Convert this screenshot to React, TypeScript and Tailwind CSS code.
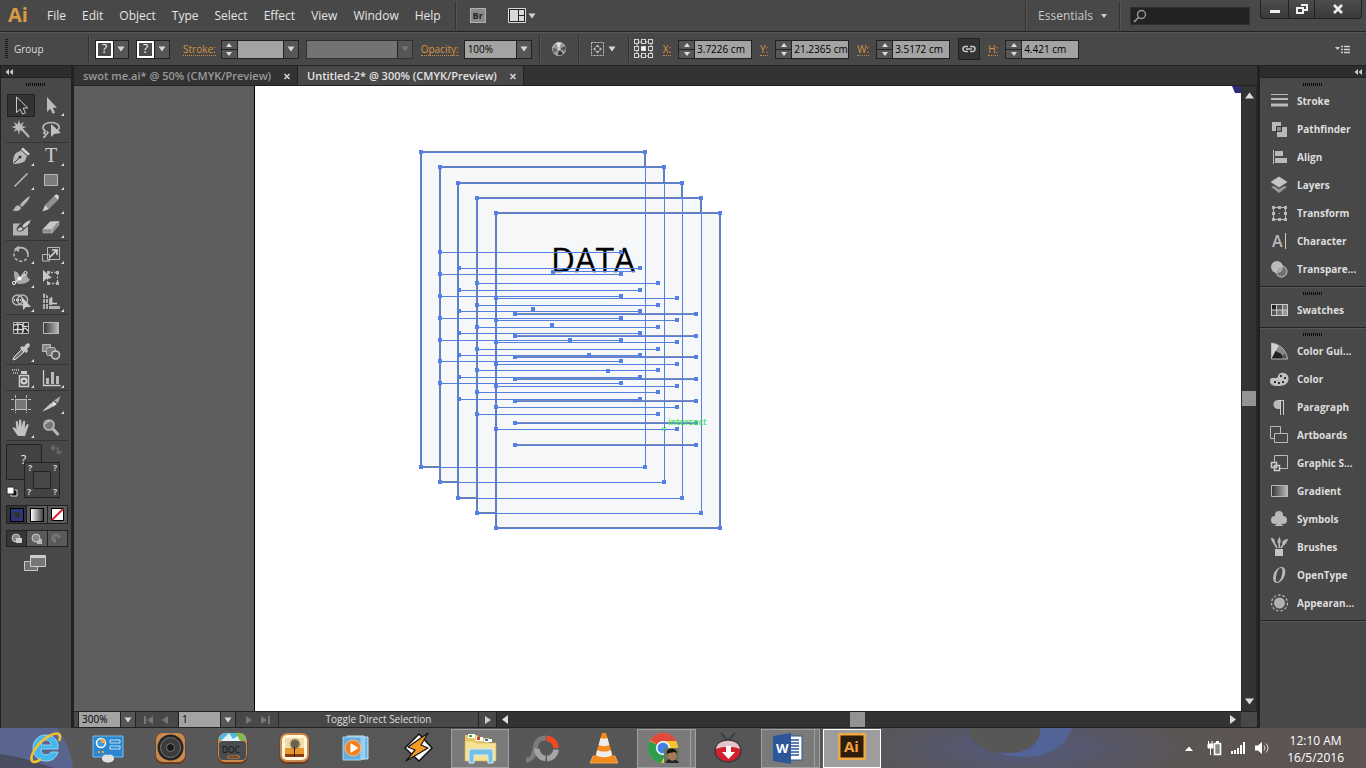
import React from 'react';

const menus = ['File', 'Edit', 'Object', 'Type', 'Select', 'Effect', 'View', 'Window', 'Help'];

const G = '#b9b9b9';

interface IconProps {
  w: number;
  h: number;
  children: React.ReactNode;
}

const Icon: React.FC<IconProps> = ({ w, h, children }) => (
  <svg width={w} height={h} viewBox={`0 0 ${w} ${h}`} className="shrink-0" fill="none" aria-hidden="true">
    {children}
  </svg>
);

const Separator = () => <div className="h-7 w-px shrink-0 bg-[#333333] shadow-[1px_0_0_#545454]" />;

const Grip = () => (
  <div className="flex h-[9px] items-center justify-center pt-1">
    <Icon w={20} h={3}>
      <path d="M0 1.500h20" stroke="#0c0c0c" strokeWidth="3" strokeDasharray="1 1" shapeRendering="crispEdges" />
    </Icon>
  </div>
);

const Down = ({ dim = false }: { dim?: boolean }) => (
  <Icon w={8} h={6}>
    <path d="M.5.5h7L4 5.500z" fill={dim ? '#777' : '#d6d6d6'} />
  </Icon>
);

const Spinner = ({ label }: { label: string }) => (
  <div className="flex h-full w-4 shrink-0 flex-col border-r border-[#222] bg-[#565656]">
    <button aria-label={`Increase ${label}`} className="flex flex-1 items-center justify-center border-b border-[#222]">
      <Icon w={6} h={4}><path d="M0 4h6L3 0z" fill="#ddd" /></Icon>
    </button>
    <button aria-label={`Decrease ${label}`} className="flex flex-1 items-center justify-center">
      <Icon w={6} h={4}><path d="M0 0h6L3 4z" fill="#ddd" /></Icon>
    </button>
  </div>
);

interface DropdownProps {
  label: string;
  value: string;
  id?: string;
  disabled?: boolean;
}

const Dropdown: React.FC<DropdownProps> = ({ label, value, id, disabled }) => (
  <div className="relative h-full flex-1">
    <select
      id={id}
      aria-label={id ? undefined : label}
      disabled={disabled}
      className="block h-full w-full appearance-none bg-[#a3a3a3] pl-[3px] text-[10px] text-black opacity-100 disabled:bg-[#737373]"
    >
      <option>{value}</option>
    </select>
    <span className="pointer-events-none absolute inset-y-0 right-0 flex w-[15px] items-center justify-center border-l border-[#222] bg-[#565656]">
      <Down dim={disabled} />
    </span>
  </div>
);

const labelClass = 'shrink-0 border-b border-dotted border-[#c98a45] leading-3 text-[#d8913f]';

interface NumberFieldProps {
  id: string;
  label: string;
  value: string;
}

const NumberField: React.FC<NumberFieldProps> = ({ id, label, value }) => (
  <div className="flex shrink-0 items-center gap-[7px]">
    <label htmlFor={id} className={labelClass}>{label}</label>
    <div className="flex h-[19px] w-[74px] border border-[#222]">
      <Spinner label={label} />
      <input id={id} defaultValue={value} className="h-full w-full min-w-0 bg-[#a3a3a3] pl-[2px] text-[10px] text-black" />
    </div>
  </div>
);

const SwatchPicker = ({ label }: { label: string }) => (
  <button aria-label={label} className="flex h-[19px] shrink-0 border border-[#222] bg-[#565656]">
    <span className="flex h-full w-[17px] items-center justify-center border-2 border-white bg-[#4c4c4c] text-[12px] leading-3 text-white">?</span>
    <span className="flex h-full w-[15px] items-center justify-center border-l border-[#222]"><Down /></span>
  </button>
);

const MenuBar = () => (
  <header className="flex h-8 shrink-0 items-stretch border-b border-[#222] bg-[#484848] text-[12px] text-[#e4e4e4]">
    <div className="flex items-center pl-2">
      <svg width="22" height="28" viewBox="0 0 22 28" aria-label="Illustrator">
        <text x="0" y="20" fontFamily="'Open Sans', sans-serif" fontWeight="700" fontSize="20" fill="#d89b45">Ai</text>
      </svg>
    </div>
    <nav className="flex items-center gap-4 pl-[17px]">
      {menus.map((m) => (
        <button key={m}>{m}</button>
      ))}
    </nav>
    <div className="flex items-center gap-[14px] pl-[14px]">
      <Separator />
      <button aria-label="Bridge" className="flex h-[15px] w-4 items-center justify-center border border-[#b0b0b0] bg-[#8a8a8a] text-[9px] font-bold text-[#222]">Br</button>
      <button aria-label="Arrange documents" className="ml-2 flex items-center gap-[2px]">
        <Icon w={18} h={15}>
          <path d="M.5.5h17v14H.5z" fill="#222" stroke="#ddd" />
          <path d="M2 2h8v11H2zM11 2h5v5h-5zM11 8h5v5h-5z" fill="#d8d8d8" />
        </Icon>
        <Down />
      </button>
    </div>
    <div className="ml-auto flex items-center">
      <Separator />
      <button className="flex items-center gap-2 px-3 text-[#c8c8c8]">
        Essentials
        <Icon w={6} h={4}><path d="M0 0h6L3 4z" fill="#ccc" /></Icon>
      </button>
      <Separator />
      <div className="relative ml-[10px]">
        <input aria-label="Search" className="block h-[18px] w-[120px] border border-[#303030] bg-[#222222] pl-5" />
        <span className="pointer-events-none absolute top-[2px] left-[3px]">
          <Icon w={14} h={14}>
            <circle cx="8.5" cy="5.5" r="4" stroke="#999" strokeWidth="1.4" />
            <path d="M5.6 8.4 1 13" stroke="#999" strokeWidth="1.6" />
          </Icon>
        </span>
      </div>
      <div className="mr-1 ml-[10px] flex h-[19px] self-start rounded-b-sm border border-t-0 border-[#222] bg-linear-to-b from-[#4d4d4d] to-[#3a3a3a]">
        <button aria-label="Minimize" className="flex w-7 items-center justify-center border-r border-[#222]">
          <Icon w={12} h={10}><path d="M1 6h10v3H1z" fill="#eee" /></Icon>
        </button>
        <button aria-label="Restore" className="flex w-[26px] items-center justify-center border-r border-[#222]">
          <Icon w={12} h={10}>
            <path d="M5 1h6v5H8M1 4h6v5H1z" stroke="#eee" strokeWidth="2" />
          </Icon>
        </button>
        <button aria-label="Close" className="flex w-[46px] items-center justify-center">
          <Icon w={12} h={10}><path d="m2 1 8 8M10 1 2 9" stroke="#eee" strokeWidth="2.6" /></Icon>
        </button>
      </div>
    </div>
  </header>
);

const ControlBar = () => (
  <div className="flex h-[34px] shrink-0 items-center border-t border-b border-t-[#575757] border-b-[#222] bg-[#484848] pl-[5px] text-[10px] text-[#dcdcdc]">
    <Icon w={3} h={20}><path d="M1.500 0v20" stroke="#1c1c1c" strokeWidth="3" strokeDasharray="1 1" /></Icon>
    <span className="w-20 shrink-0 pl-[6px]">Group</span>
    <Separator />
    <div className="ml-[6px] flex gap-[7px]">
      <SwatchPicker label="Fill" />
      <SwatchPicker label="Stroke color" />
    </div>
    <div className="ml-[13px] flex items-center gap-[5px]">
      <label htmlFor="stroke" className={labelClass}>Stroke:</label>
      <div className="flex h-[19px] w-[78px] border border-[#222]">
        <Spinner label="stroke" />
        <Dropdown id="stroke" label="Stroke" value="" />
      </div>
    </div>
    <div className="ml-[7px] flex h-[19px] w-[107px] shrink-0 border border-[#303030]">
      <Dropdown label="Brush definition" value="" disabled />
    </div>
    <div className="ml-2 flex items-center gap-[5px]">
      <label htmlFor="opacity" className={labelClass}>Opacity:</label>
      <div className="flex h-[19px] w-[68px] border border-[#222]">
        <Dropdown id="opacity" label="Opacity" value="100%" />
      </div>
    </div>
    <div className="ml-[7px] flex items-center gap-3">
      <Separator />
      <button aria-label="Recolor artwork">
        <Icon w={14} h={14}>
          <circle cx="7" cy="7" r="6.500" fill="#999" stroke="#c4c4c4" />
          <path d="M7 7 4 1.200A6.500 6.500 0 0 1 9 .9z" fill="#e0e0e0" />
          <path d="m7 7 6-3a6.500 6.500 0 0 1 .2 5z" fill="#555" />
          <path d="m7 7 4 5a6.500 6.500 0 0 1-5 1.200z" fill="#333" />
          <path d="m7 7-5 4a6.500 6.500 0 0 1-1.300-5z" fill="#666" />
          <circle cx="7" cy="7" r="1.800" fill="#ccc" />
        </Icon>
      </button>
      <Separator />
      <button aria-label="Isolate" className="flex items-center gap-1">
        <Icon w={13} h={14}>
          <path d="M.5.5h12v13H.5z" stroke="#c4c4c4" strokeDasharray="2 1" />
          <path d="M6.500 2.500 8.500 5h-4zM6.500 11.500l2-2.500h-4zM2 7l2.500-2v4zM11 7 8.500 5v4z" fill="#c4c4c4" />
        </Icon>
        <Down />
      </button>
      <Separator />
    </div>
    <div className="ml-[5px] shrink-0">
      <Icon w={20} h={20}>
        <path d="M3 3h14v14H3z" stroke="#ccc" />
        {[0, 7, 14].map((y) => [0, 7, 14].map((x) => (
          <rect key={`${x}-${y}`} x={x + 0.5} y={y + 0.5} width="4" height="4" fill={x === 7 && y === 7 ? '#fff' : '#484848'} stroke="#d4d4d4" />
        )))}
      </Icon>
    </div>
    <div className="ml-[9px] flex items-center gap-2">
      <NumberField id="x" label="X:" value="3.7226 cm" />
      <NumberField id="y" label="Y:" value="21.2365 cm" />
      <NumberField id="w" label="W:" value="3.5172 cm" />
      <button aria-label="Constrain proportions" className="flex h-[22px] w-[22px] items-center justify-center border border-[#222] bg-[#333]">
        <Icon w={14} h={8}>
          <path d="M6 1.500H3.500a2.500 2.500 0 0 0 0 5H6M8 1.500h2.500a2.500 2.500 0 0 1 0 5H8M4 4h6" stroke="#c4c4c4" strokeWidth="1.600" />
        </Icon>
      </button>
      <NumberField id="h" label="H:" value="4.421 cm" />
    </div>
    <button aria-label="Panel menu" className="mr-4 ml-auto">
      <Icon w={15} h={9}>
        <path d="M0 2h5L2.500 5z" fill="#ccc" />
        <path d="M6 1.500h2M9 1.500h6M6 4.500h2M9 4.500h6M6 7.500h2M9 7.500h6" stroke="#ccc" strokeWidth="1.500" />
      </Icon>
    </button>
  </div>
);

/* every tool glyph is drawn in a 28x24 cell */
const Corner = () => <path d="M24 22h3v-3z" fill="#ddd" />;

interface Tool {
  name: string;
  art: React.ReactNode;
  more?: boolean;
}

const toolGroups: Tool[][] = [
  [
    { name: 'Selection', art: <path d="M9.500 3v15.500l3.700-3.300 2.300 5 3-1.400-2.400-4.800h4.700z" fill="#303030" stroke="#ccc" /> },
    { name: 'Direct Selection', more: true, art: <path d="M10 3v15l3.300-3.200 2.400 5 2.400-1.100-2.300-4.900H20z" fill={G} /> },
    {
      name: 'Magic Wand',
      art: (
        <>
          <path d="m14 10 8 9" stroke={G} strokeWidth="2" />
          <path d="m12 2 1.200 4.300L17 4l-2 4 4.500 1-4.500 1.500L17 14l-4-2-1 5-1.300-5L6.500 14l2.300-3.500L4.500 9l4.300-1.200L6.500 4l4 2.300z" fill={G} />
        </>
      ),
    },
    {
      name: 'Lasso',
      art: (
        <>
          <path d="M9 13.500C3 10 7 4.500 14 4.500s11 5 6 8M9 13.500c-2 0-3 2-1 2.500s4-1 2-2.500m-1 2.500c0 1.500-1 3-3 3.500" stroke={G} strokeWidth="1.700" />
          <path d="M14 6v13l3-3 7-1z" fill="#c2c2c2" />
        </>
      ),
    },
  ],
  [
    {
      name: 'Pen',
      more: true,
      art: (
        <>
          <path d="M6 20c0-6 1-9 3-11l5-2.500 6 5.500-2 5c-3 2-6 3-12 3z" fill={G} />
          <path d="m16 3.500 7 6.500-2 1.500-7-6z" fill="#d2d2d2" />
          <path d="m6.500 19.500 6-6" stroke="#333" /><circle cx="13" cy="13" r="1.500" fill="#333" />
        </>
      ),
    },
    {
      name: 'Type',
      more: true,
      art: <text x="14" y="18" textAnchor="middle" fontFamily="'Liberation Serif', serif" fontSize="20" fill="#cccccc">T</text>,
    },
    { name: 'Line Segment', more: true, art: <path d="M7.500 18.500 20.500 5.500" stroke={G} strokeWidth="1.600" /> },
    { name: 'Rectangle', more: true, art: <path d="M7.500 6.500h13v11h-13z" fill="#7c7c7c" stroke={G} /> },
    {
      name: 'Paintbrush',
      art: (
        <>
          <path d="M23 4c-4 2-8 6-10 9l2 2c3-3 7-7 8-11z" fill={G} />
          <path d="M12 13.500c-3-.5-4 1-4.500 3-.5 1-1.500 1.500-2.500 1.500 4 2 9 1 9-2.500z" fill={G} />
        </>
      ),
    },
    {
      name: 'Pencil',
      more: true,
      art: (
        <>
          <path d="m8 13 9-9 4 4-9 9z" fill="#8f8f8f" />
          <path d="m17 4 2-1.500q2-.5 3 2L21 8z" fill="#d6d6d6" />
          <path d="M8 13 5.500 19.500 12 17z" fill="#cfcfcf" />
        </>
      ),
    },
    {
      name: 'Blob Brush',
      art: (
        <>
          <path d="M6 7.500h8c-4 3-5 5-4 7 3 2 6 1 8-2l3-2v9H6z" fill="#b4b4b4" />
          <path d="M24 3.500c-5 2-8 4-9 7l1.500 1.500C20 11 23 8 24 3.500zM14 11c-2 0-3 1.500-4 3.500 3 1 6 0 6-2z" fill="#ccc" stroke="#484848" strokeWidth=".5" />
        </>
      ),
    },
    {
      name: 'Eraser',
      more: true,
      art: (
        <>
          <path d="m13 5.500 9-.5-7 8H6z" fill="#c8c8c8" />
          <path d="M6 13h9v4H6zM15 13l7-8v4l-7 8z" fill="#8d8d8d" stroke="#bbb" strokeWidth=".6" />
        </>
      ),
    },
  ],
  [
    {
      name: 'Rotate',
      more: true,
      art: (
        <>
          <path d="M11 6.300A7 7 0 0 1 21 12" stroke={G} strokeWidth="1.700" />
          <path d="M21 12a7 7 0 1 1-12.500-4" stroke={G} strokeWidth="1.500" strokeDasharray="3 2" />
          <path d="m7 7 5-3.500V10z" fill={G} />
        </>
      ),
    },
    {
      name: 'Scale',
      more: true,
      art: (
        <>
          <path d="M10.500 5.500h12v12h-12zM5.500 12.500h7v6.500h-7z" stroke={G} />
          <path d="m13 15 6-6M15 8h5v5" stroke="#ddd" strokeWidth="1.500" />
        </>
      ),
    },
    {
      name: 'Width',
      more: true,
      art: (
        <>
          <path d="M7 5c5 1 5 4 6 7 1-5 4-6 6-4s1 5 4 5c-1 4-6 5-11 5-3 0-5-4-5-13z" fill="#a8a8a8" />
          <path d="M6 17.500 20 7" stroke="#eee" /><circle cx="7" cy="17" r="1.600" fill="#484848" stroke="#eee" />
          <circle cx="18.500" cy="7" r="1.600" fill="#484848" stroke="#eee" /><circle cx="12.500" cy="12.500" r="2" fill="#fff" />
        </>
      ),
    },
    {
      name: 'Free Transform',
      art: (
        <>
          <path d="M10.500 6.500h10v11h-10z" stroke={G} strokeWidth="1.300" strokeDasharray="2 1.500" />
          <path d="M19 5h3v3h-3zM19 16h3v3h-3zM10 16h3v3h-3zM10 5h3v3h-3z" fill={G} />
          <path d="M6 4v12l3-3 6-1z" fill="#c8c8c8" />
        </>
      ),
    },
    {
      name: 'Shape Builder',
      more: true,
      art: (
        <>
          <circle cx="10.500" cy="10" r="5" stroke={G} strokeWidth="1.500" /><circle cx="15.500" cy="10" r="5" stroke={G} strokeWidth="1.500" />
          <path d="M7 10h9" stroke="#fff" strokeWidth="1.500" strokeDasharray="1 1" />
          <path d="M16 8v12l3-3h5z" fill="#ccc" />
        </>
      ),
    },
    {
      name: 'Perspective Grid',
      more: true,
      art: (
        <>
          <path d="m6 3 5 3v13H6zM12 8l3 1v7h8v3H12z" fill="#b0b0b0" />
          <path d="M6 8.500h5M6 13.500h5M8.500 5v14M11.500 15.500H23" stroke="#484848" />
          <path d="M14.500 7v6.500H20" stroke="#ccc" strokeWidth="1.500" />
        </>
      ),
    },
  ],
  [
    {
      name: 'Mesh',
      art: (
        <>
          <path d="M6.500 6.500h15v11h-15z" fill="#303030" stroke={G} />
          <path d="M7 9c4 0 5-2 8 0s3 2 6 1M7 14c4-2 6 1 9-1s3 0 5 2M10 7c3 3-1 6 1 10M17 7c-4 3 2 6-2 10" stroke="#ddd" strokeWidth="1.300" />
        </>
      ),
    },
    { name: 'Gradient', art: <path d="M6.500 6.500h15v11h-15z" fill="url(#metal)" stroke={G} /> },
    {
      name: 'Eyedropper',
      more: true,
      art: (
        <>
          <path d="m6 20 1-3 7.500-7.500 2.500 2.500L9 19z" fill="#777" stroke="#ddd" />
          <path d="m13 8 2-2 2 1 2-3c2-2 5 0 3.500 2.500L20 9l1 2-2 2z" fill="#c8c8c8" />
        </>
      ),
    },
    {
      name: 'Blend',
      art: (
        <>
          <path d="M5.500 4.500h8v7h-8z" fill="#888" stroke={G} /><rect x="9.500" y="7.500" width="9" height="8" rx="2" fill="#777" stroke={G} />
          <circle cx="18.500" cy="15" r="4" fill="#555" stroke="#c8c8c8" strokeWidth="1.600" />
        </>
      ),
    },
  ],
  [
    {
      name: 'Symbol Sprayer',
      more: true,
      art: (
        <>
          <path d="M12.500 9.500h9v11h-9z" fill="#505050" stroke="#ccc" strokeWidth="1.500" /><path d="M14 5h6v3h-6z" fill="#ccc" />
          <circle cx="17" cy="15" r="2.500" stroke="#ddd" strokeWidth="1.800" />
          <path d="M5 4h8M6 7h6" stroke="#ccc" strokeWidth="1.300" strokeDasharray="1 1" />
        </>
      ),
    },
    {
      name: 'Column Graph',
      more: true,
      art: (
        <>
          <path d="M6.500 4v15.500h17" stroke="#ccc" strokeWidth="1.300" />
          <path d="M9 12h3v6H9zM14 6h3v12h-3zM19 10h3v8h-3z" fill={G} />
        </>
      ),
    },
  ],
  [
    {
      name: 'Artboard',
      art: (
        <>
          <path d="M8 8h12v9H8z" fill="#777" />
          <path d="M4 7.500h20M4 17.500h20M8.500 3v18M19.500 3v18" stroke={G} strokeDasharray="3 1 12 1 3" />
        </>
      ),
    },
    {
      name: 'Slice',
      more: true,
      art: (
        <>
          <path d="M17 8.500 23.500 4 21 11z" fill="#aaa" />
          <path d="m16 9 4 3-3.500 2.500-2-2z" fill="#e0e0e0" />
          <path d="m14 11 3 3c-4 2-7 4-12 5.500z" fill="#c8c8c8" />
        </>
      ),
    },
    {
      name: 'Hand',
      more: true,
      art: (
        <path
          d="M11 20c-2-3-4-5-5.500-8 1-1.500 2.500-.5 4 1.500L8.700 6c.7-1.500 2-1 2.300.3l1 4.700V4.500c.5-1.500 2-1.500 2.300 0L14.700 11 16 5.500c.7-1.200 2-.8 2.200.5L17.700 12l2-3.500c1-1 2.300 0 1.800 1.300L19 17l-1 3z"
          fill="#c0c0c0"
        />
      ),
    },
    {
      name: 'Zoom',
      art: (
        <>
          <circle cx="12" cy="9" r="5" fill="#777" stroke={G} strokeWidth="1.700" />
          <path d="m16 13 5.500 6" stroke={G} strokeWidth="3" />
          <path d="M9 8c.5-2 2-3 4-2.500" stroke="#ddd" />
        </>
      ),
    },
  ],
];

const DockHeader = ({ end = false }: { end?: boolean }) => (
  <div className={`flex h-3 items-center border-b border-[#222] bg-[#2d2d2d] px-1 ${end ? 'justify-end' : ''}`}>
    <Icon w={8} h={6}><path d="M4 0v6L.5 3zM8 0v6L4.500 3z" fill="#ccc" /></Icon>
  </div>
);

const ToolPanel = () => (
  <aside className="flex w-[73px] shrink-0 flex-col border-r-2 border-l border-[#222] bg-[#484848]">
    <DockHeader />
    <Grip />
    <div className="flex flex-col pt-[7px] pr-[3px] pl-[5px]">
      {toolGroups.map((group, i) => (
        <div key={i} className="mb-px grid grid-cols-2 border-b border-[#343434] px-px">
          {group.map((t) => (
            <button
              key={t.name}
              aria-label={t.name}
              className={t.name === 'Selection' ? 'h-[23px] w-7 border border-[#222] bg-[#333]' : 'h-6 w-7'}
            >
              <svg width="28" height="24" viewBox="0 0 28 24" fill="none" className={t.name === 'Selection' ? '-m-px' : ''}>
                {t.art}
                {t.more && <Corner />}
              </svg>
            </button>
          ))}
        </div>
      ))}
      <Icon w={60} h={58}>
        <g fontFamily="'Open Sans', sans-serif" fill="#ccc">
          <path d="M.5 2.500h35v35H.5z" fill="#434343" stroke="#222" />
          <text x="15" y="22" fontSize="12" fill="#eee">?</text>
          <path d="M18.500 20.500h35v35h-35z" fill="#434343" stroke="#222" />
          <path d="M27.500 29.500h17v17h-17z" fill="#484848" stroke="#222" />
          <g fontSize="9" fontWeight="700">
            <text x="22" y="29">?</text><text x="47" y="29">?</text><text x="21" y="53">?</text><text x="47" y="53">?</text>
          </g>
        </g>
        <path d="M45 6h5q3 0 3 5M48 3l-3 3 3 3M50 9l3 3 3-3" stroke="#6a6a6a" strokeWidth="1.300" />
        <path d="M5 48h6v6H5z" fill="#111" stroke="#ddd" /><path d="M1 45h7v7H1z" fill="#fff" stroke="#222" />
      </Icon>
      <div className="mt-[5px] flex h-[19px] border border-[#222] bg-[#5a5a5a]">
        <button aria-label="Color" className="flex flex-1 items-center justify-center bg-[#333]">
          <span className="h-3 w-3 border-[3px] border-[#2a3780] bg-[#333] outline outline-black" />
        </button>
        <button aria-label="Gradient" className="flex flex-1 items-center justify-center border-x border-[#222]">
          <span className="h-3 w-3 bg-linear-to-r from-white to-[#444] outline outline-black" />
        </button>
        <button aria-label="None" className="flex flex-1 items-center justify-center">
          <Icon w={13} h={13}>
            <path d="M.5.5h12v12H.5z" fill="#fff" stroke="#000" /><path d="M1 12 12 1" stroke="#d8242c" strokeWidth="2" />
          </Icon>
        </button>
      </div>
      <div className="mt-[6px] flex h-[17px] border border-[#222] bg-[#5a5a5a]">
        {['Draw Normal', 'Draw Behind', 'Draw Inside'].map((name, i) => (
          <button
            key={name}
            aria-label={name}
            className={`flex flex-1 items-center justify-center ${i === 0 ? 'bg-[#363636]' : ''} ${i === 1 ? 'border-x border-[#222]' : ''} ${i === 2 ? 'opacity-40' : ''}`}
          >
            <Icon w={12} h={12}>
              {i === 1 && <path d="M6 6h5v5H6z" fill={G} />}
              <circle cx="5" cy="5" r="4" fill="#888" stroke="#c4c4c4" />
              {i !== 1 && <path d="M5 5h6v5H5z" fill={i ? '#555' : '#ccc'} />}
            </Icon>
          </button>
        ))}
      </div>
      <button aria-label="Change Screen Mode" className="mt-2 mr-1 flex justify-center">
        <Icon w={22} h={17}>
          <path d="M.5 6.500h13v9H.5z" fill="#707070" stroke="#ccc" /><path d="M6.500.5h15v11h-15z" fill="#777" stroke="#ccc" />
          <path d="M7 2h14" stroke="#ccc" strokeWidth="2" />
        </Icon>
      </button>
    </div>
  </aside>
);

/* panel glyphs live in a 20x20 box */
const panelGroups: { name: string; art: React.ReactNode }[][] = [
  [
    { name: 'Stroke', art: <><path d="M2 3.500h17" stroke={G} /><path d="M2 8h17" stroke={G} strokeWidth="2" /><path d="M2 14h17" stroke={G} strokeWidth="3" /></> },
    {
      name: 'Pathfinder',
      art: (
        <>
          <path d="M3 3h9v9H3zM8 8h10v10H8z" fill={G} /><path d="M7.500 7.500h5v5h-5z" fill="#888" stroke="#333" />
        </>
      ),
    },
    { name: 'Align', art: <><path d="M4.500 3v14" stroke={G} /><path d="M6 4h8v5H6zM6 11h12v5H6z" fill={G} /></> },
    {
      name: 'Layers',
      art: <><path d="m2 12 3-1 5 3 5-3 3 1-8 6z" fill="#999" /><path d="m10 1.500 8.500 5.500-8.500 5.500L1.500 7z" fill="#c4c4c4" /></>,
    },
    {
      name: 'Transform',
      art: (
        <>
          <path d="M4.500 4.500h12v12h-12z" stroke={G} />
          <path d="M3 3h3v3H3zM9 3h3v3H9zM15 3h3v3h-3zM3 9h3v3H3zM15 9h3v3h-3zM3 15h3v3H3zM9 15h3v3H9zM15 15h3v3h-3zM10 10h1v1h-1z" fill={G} />
        </>
      ),
    },
    {
      name: 'Character',
      art: (
        <>
          <text x="3" y="16" fontFamily="'Open Sans', sans-serif" fontWeight="600" fontSize="16" fill={G}>A</text>
          <path d="M16.500 2v16" stroke="#ccc" />
        </>
      ),
    },
    {
      name: 'Transpare...',
      art: <><circle cx="8" cy="8" r="6" fill="#bbb" /><circle cx="12.500" cy="12.500" r="5.500" fill="#999" fillOpacity=".5" stroke="#ccc" /></>,
    },
  ],
  [
    {
      name: 'Swatches',
      art: (
        <>
          <path d="M2 4h17v12H2z" fill="#ccc" />
          <path d="M3 5h4v4.500H3z" fill="#222" /><path d="M8 5h5v4.500H8zM3 10.500h4V15H3z" fill="#555" />
          <path d="M14 5h4v4.500h-4zM8 10.500h5V15H8z" fill="#777" /><path d="M14 10.500h4V15h-4z" fill="#999" />
        </>
      ),
    },
  ],
  [
    {
      name: 'Color Gui...',
      art: (
        <>
          <path d="M2.500 18V2c3 .5 5 1 7.500 3z" fill="#d0d0d0" />
          <path d="M2.500 18 10 5c3 2 5 4 7 8z" fill="#888" />
          <path d="m2.500 18 14.500-5c1 2 1.500 3 1.500 5z" fill="#555" />
          <path d="m2.500 18 4-8 6 3 1 5z" fill="#222" />
          <path d="M2.500 2c8 1 15 7 16 16h-16z" stroke={G} />
        </>
      ),
    },
    {
      name: 'Color',
      art: (
        <>
          <path d="M1 12c0-4 3-3 6-3s1-4 5-5 8 2 7.500 6.500S15 17 9 17s-8-2-8-5z" fill="#c0c0c0" />
          <path d="M5 12h2v2H5zM9 13h2v2H9zM13 12h2v2h-2zM15 8h2v2h-2zM11 6h2v2h-2z" fill="#333" />
        </>
      ),
    },
    { name: 'Paragraph', art: <><path d="M9 3a4.500 4.500 0 0 0 0 9h2V3z" fill={G} /><path d="M9 3.500h6M11.500 3v15M14.500 3v15" stroke="#ccc" /></> },
    { name: 'Artboards', art: <><path d="M1.500 1.500h10v12h-10z" stroke={G} /><path d="M5.500 8.500h13v9h-13z" fill="#484848" stroke={G} /></> },
    { name: 'Graphic S...', art: <><path d="M5.500 10V2.500h13v13H11" stroke={G} /><path d="M2.500 9.500h5v5h-5zM5.500 12.500h5v5h-5z" fill="#484848" stroke="#ccc" strokeWidth="1.500" /></> },
    { name: 'Gradient', art: <path d="M2.500 4.500h16v11h-16z" fill="url(#metal)" stroke={G} /> },
    {
      name: 'Symbols',
      art: <><circle cx="10" cy="6" r="4" fill={G} /><circle cx="6" cy="11" r="4" fill={G} /><circle cx="14" cy="11" r="4" fill={G} /><path d="M9 9h2c0 4 1 7 4 8H5c3-1 4-4 4-8z" fill={G} /></>,
    },
    {
      name: 'Brushes',
      art: <><path d="M6 12h8v7H6z" fill="#c4c4c4" /><path d="M8 11 4 4M10.500 11 10 5M12 11l4-6" stroke={G} strokeWidth="1.600" /><path d="M2 1c3 0 4 2 4 5-2 0-4-2-4-5zM8.500 6c0-3 1-5 2-6 1 2 1.500 4 1 6zM13 6c1-3 3-4 6-4-1 4-3 6-5 6z" fill={G} /></>,
    },
    {
      name: 'OpenType',
      art: <path fillRule="evenodd" d="M12.500 2c3.500 0 4.500 3.500 3.500 7.500S11.500 18 8 18s-4.500-4-3.500-8S9 2 12.500 2zm-.7 1C9.500 3 8 6.500 7.300 10s-.8 7 1 7c2.300 0 4-4 4.700-7.500s.8-6.500-1.200-6.500z" fill={G} />,
    },
    { name: 'Appearan...', art: <><circle cx="10.500" cy="10" r="5.500" fill="#b0b0b0" /><circle cx="10.500" cy="10" r="8" stroke={G} strokeWidth="1.300" strokeDasharray="2.500 2" /></> },
  ],
];

const PanelDock = () => (
  <aside className="w-[107px] shrink-0 border-l border-[#222] bg-[#484848]">
    <DockHeader end />
    {panelGroups.map((group, i) => (
      <section key={i} className="border-b border-[#222] pb-[3px] shadow-[0_1px_0_#575757]">
        <Grip />
        {group.map((p) => (
          <button key={p.name} className="flex h-7 w-full items-center gap-[8px] pl-[9px] text-[10px] font-bold text-[#dedede]">
            <Icon w={20} h={20}>{p.art}</Icon>
            {p.name}
          </button>
        ))}
      </section>
    ))}
  </aside>
);

/* artwork, in artboard pixels */
const pages = [[347, 66], [366, 81], [384, 97], [403, 112], [422, 127]];
const rules = [
  { x: 366, ys: [166, 188, 210, 232, 254, 275, 297] },
  { x: 385, ys: [182, 204, 225, 247, 269, 291, 313] },
  { x: 403, ys: [197, 219, 241, 263, 284, 306, 328] },
  { x: 422, ys: [212, 234, 256, 278, 300, 321, 343] },
  { x: 441, ys: [228, 250, 271, 293, 315, 337, 359] },
];
const anchors = [[479, 186], [459, 223], [478, 239], [496, 254], [515, 269], [534, 285]];

const Anchor = ({ x, y }: { x: number; y: number }) => <rect x={x - 2} y={y - 2} width="4" height="4" fill="#5580e6" />;

const Canvas = () => (
  <svg className="block min-h-0 w-full flex-1 bg-[#5e5e5e]" fill="none" role="img" aria-label="Artboard">
    <rect x="180" y="0" width="100%" height="100%" fill="#000" />
    <rect x="181" y="0" width="100%" height="100%" fill="#fff" />
    <svg x="100%" width="1" height="1" className="overflow-visible">
      <path d="M-9 0H0v7h-6z" fill="#2b2b78" />
    </svg>
    {pages.map(([x, y]) => (
      <rect key={x} x={x} y={y} width="224" height="315" fill="#f5f7f9" stroke="#6e7fae" strokeWidth="2" />
    ))}
    {rules[4].ys.map((y) => (
      <path key={y} d={`M441 ${y}h181`} stroke="#8088b8" strokeWidth="2" />
    ))}
    <text x="477" y="186" fontFamily="'Open Sans', sans-serif" fontSize="33" fill="#000" stroke="#000" strokeWidth=".3">DATA</text>
    <path d="M479 185.500h82" stroke="#5580e6" />
    {pages.map(([x, y]) => (
      <g key={x}>
        <rect x={x + 0.5} y={y + 0.5} width="224" height="315" stroke="#5580dd" />
        <Anchor x={x} y={y} />
        <Anchor x={x + 224} y={y} />
        <Anchor x={x} y={y + 315} />
        <Anchor x={x + 224} y={y + 315} />
      </g>
    ))}
    {rules.map(({ x, ys }) => ys.map((y) => (
      <g key={`${x}-${y}`}>
        <path d={`M${x} ${y + 0.5}h181`} stroke="#5580dd" />
        <Anchor x={x} y={y} />
        <Anchor x={x + 181} y={y} />
      </g>
    )))}
    {anchors.map(([x, y]) => <Anchor key={x} x={x} y={y} />)}
    <path d="m588 341 4 4m0-4-4 4" stroke="#3fd77f" />
    <text x="594" y="339" fontFamily="'Open Sans', sans-serif" fontSize="9" fontWeight="600" fill="#3fe05a">intersect</text>
  </svg>
);

const tabs = [
  { name: 'swot me.ai* @ 50% (CMYK/Preview)', active: false },
  { name: 'Untitled-2* @ 300% (CMYK/Preview)', active: true },
];

const DocumentTabs = () => (
  <div className="flex h-5 shrink-0 border-b border-[#222] bg-[#333] text-[11px] font-semibold">
    {tabs.map((t) => (
      <div
        key={t.name}
        className={`flex items-center justify-between border-r border-[#222] pt-px pr-[6px] pl-[9px] ${t.active ? 'w-[226px] bg-[#484848] text-[#e2e2e2]' : 'w-[224px] text-[#9a9a9a]'}`}
      >
        <button className="whitespace-nowrap">{t.name}</button>
        <button aria-label={`Close ${t.name}`}>
          <Icon w={8} h={7}><path d="m1.500 1 5 5M6.500 1l-5 5" stroke="#d5d5d5" strokeWidth="1.500" /></Icon>
        </button>
      </div>
    ))}
  </div>
);

const StatusBar = () => (
  <div className="flex h-[15px] min-w-0 flex-1 items-stretch bg-[#484848] text-[10px] text-[#dedede]">
    <div className="ml-1 flex w-[58px] border-x border-[#222]"><Dropdown label="Zoom level" value="300%" /></div>
    <button aria-label="First artboard" className="ml-2 flex items-center"><Icon w={9} h={8}><path d="M0 0h2v8H0zM9 0v8L3 4z" fill="#777" /></Icon></button>
    <button aria-label="Previous artboard" className="ml-[9px] flex items-center"><Icon w={6} h={8}><path d="M6 0v8L0 4z" fill="#777" /></Icon></button>
    <div className="ml-[10px] flex w-[58px] border-x border-[#222]"><Dropdown label="Artboard" value="1" /></div>
    <button aria-label="Next artboard" className="ml-[10px] flex items-center"><Icon w={6} h={8}><path d="M0 0v8l6-4z" fill="#777" /></Icon></button>
    <button aria-label="Last artboard" className="ml-[9px] flex items-center"><Icon w={9} h={8}><path d="M7 0h2v8H7zM0 0v8l6-4z" fill="#777" /></Icon></button>
    <div className="ml-2 flex w-[200px] items-center justify-center border-l border-[#2a2a2a] text-[10px]">Toggle Direct Selection</div>
    <button aria-label="Status menu" className="flex w-[19px] items-center justify-center border-x border-[#222]">
      <Icon w={6} h={8}><path d="M0 0v8l6-4z" fill="#ccc" /></Icon>
    </button>
    <div className="flex flex-1 items-center bg-[#333] px-[5px]">
      <button aria-label="Scroll left"><Icon w={6} h={9}><path d="M6 0v9L0 4.500z" fill="#ddd" /></Icon></button>
      <div className="flex h-full flex-1 justify-center"><div className="mr-6 h-full w-[15px] bg-[#939393]" /></div>
      <button aria-label="Scroll right"><Icon w={6} h={9}><path d="M0 0v9l6-4.500z" fill="#ddd" /></Icon></button>
    </div>
  </div>
);

const VerticalScroll = () => (
  <div className="flex w-4 shrink-0 flex-col items-center border-x border-[#2a2a2a] bg-[#333] py-[6px]">
    <button aria-label="Scroll up"><Icon w={9} h={7}><path d="M0 6.500h9L4.500.5z" fill="#ddd" /></Icon></button>
    <div className="flex w-full flex-1 items-center"><div className="h-[15px] w-full bg-[#939393]" /></div>
    <button aria-label="Scroll down"><Icon w={9} h={7}><path d="M0 .5h9l-4.500 6z" fill="#ddd" /></Icon></button>
  </div>
);

const Workspace = () => (
  <main className="flex min-w-0 flex-1 flex-col border-r-2 border-l border-[#222]">
    <DocumentTabs />
    <div className="flex min-h-0 flex-1">
      <div className="flex min-w-0 flex-1 flex-col"><Canvas /></div>
      <VerticalScroll />
    </div>
    <div className="flex shrink-0 border-y border-[#222] bg-[#484848] pr-4"><StatusBar /></div>
  </main>
);

const Wood = ({ children }: { children: React.ReactNode }) => (
  <>
    <rect x="5.500" y="4" width="30" height="31" rx="7" fill="#6b3c1c" />
    <rect x="6" y="4" width="29" height="29" rx="7" fill="#c98a50" />
    {children}
  </>
);

/* taskbar icons use a 40x38 box */
const apps: { name: string; state?: 'open' | 'stack' | 'active'; art: React.ReactNode }[] = [
  {
    name: 'Internet Explorer',
    art: (
      <>
        <path fillRule="evenodd" d="M20 6c8 0 13 6 12 14H15c0 6 7 8 10 3h7c-2 6-6 9-12 9-8 0-13-6-13-13S12 6 20 6zm-5 10h10c0-6-9-7-10 0z" fill="#42b8ee" stroke="#a6e3fb" strokeWidth=".8" />
        <path d="M33 12c3-7-1-10-10-5C12 13 3 27 6 32c1 2 5 1 9-2" stroke="#f4c22e" strokeWidth="2.600" />
      </>
    ),
  },
  {
    name: 'Control Panel',
    art: (
      <>
        <path d="M5 7h30v21H5z" fill="#2b86cf" stroke="#79bdea" />
        <circle cx="13" cy="14" r="4.500" stroke="#fff" fill="#3e9be0" strokeWidth="1.500" /><path d="M13 14V9.500a4.500 4.500 0 0 1 4.500 4.500z" fill="#f6a62b" />
        <path d="M22 11h10v3H22zM22 17h10v3H22z" stroke="#bfe3fa" /><path d="M10 22h2v2h-2zM14 22h2v2h-2z" fill="#f6a62b" />
        <path d="M14 29c1-4 4-4 6-3 2-1 5-1 6 3 1 6-13 6-12 0z" fill="#e0e0e0" />
      </>
    ),
  },
  {
    name: 'Speaker',
    art: (
      <Wood>
        <circle cx="20.500" cy="18.500" r="13" fill="#242424" /><circle cx="20.500" cy="18.500" r="10" fill="#3c3c3c" stroke="#777" />
        <circle cx="20.500" cy="18.500" r="4" fill="#181818" stroke="#777" />
      </Wood>
    ),
  },
  {
    name: 'Documents',
    art: (
      <Wood>
        <path d="M7 8c4-6 10-4 13-4h7c4 0 7 3 7 7H7z" fill="#56b7dd" /><path d="m9 12 8-8 4 6 6-4 3 6z" fill="#e4f4f6" /><path d="M24 4c5-1 8 2 9 6l-5 2z" fill="#86b845" />
        <rect x="7" y="12" width="27" height="19" rx="4" fill="#4a4d4f" />
        <text x="10" y="24" fontFamily="'DejaVu Sans', sans-serif" fontSize="8" fill="#161616">DOC</text>
        <path d="M16 27h11v2H16z" stroke="#d88a45" fill="#111" />
      </Wood>
    ),
  },
  {
    name: 'Photos',
    art: (
      <Wood>
        <rect x="8" y="6" width="25" height="25" rx="5" fill="#fff6dc" /><path d="M11 9h19v11H11z" fill="#f1dfa7" /><path d="M11 19h19v6H11z" fill="#e9962c" /><path d="M11 25h19v3H11z" fill="#8a3c14" />
        <circle cx="21" cy="15" r="4.500" fill="#6b6048" stroke="#8d8262" strokeWidth="2" strokeDasharray="1 1" /><path d="M20.500 18v10" stroke="#332619" />
      </Wood>
    ),
  },
  {
    name: 'Media Player',
    art: (
      <>
        <path d="M14 8h18v22H14z" fill="#72b7e5" stroke="#c0e2f6" /><path d="M11 7h17v23H11z" fill="#8cc9ed" stroke="#c0e2f6" /><path d="M7 8h18v23H7z" fill="#62aee2" stroke="#a8d5f2" />
        <circle cx="17" cy="19" r="8" fill="#f28022" stroke="#fbc18b" /><path d="M14.500 14v10l8-5z" fill="#fff" />
      </>
    ),
  },
  {
    name: 'Winamp',
    art: (
      <>
        <path d="m21 5 13 14-13 13L7 19z" fill="#fff" stroke="#141414" strokeWidth="1.500" />
        <path d="M30 4 10 18l7 3-9 11 22-13-7-3z" fill="#f59a23" stroke="#141414" strokeWidth="1.200" strokeLinejoin="round" />
      </>
    ),
  },
  {
    name: 'File Explorer',
    state: 'open',
    art: (
      <>
        <path d="M5 6h12l2 3h10v22H5z" fill="#e9c967" /><path d="M8 5h7v4H8zM16 8h7v4h-7zM24 10h8v3h-8z" fill="#fff" /><path d="M9 6h3v2H9z" fill="#35a84a" /><path d="M17 8h3v3h-3z" fill="#d2402e" /><path d="M25 10h3v2h-3z" fill="#3074c8" />
        <path d="M5 12h9l2 2h20v18H5z" fill="#f7e194" stroke="#d2b35a" strokeWidth=".6" />
        <path d="M9 34V22q0-2 2-2h20q2 0 2 2v12h-5v-8H14v8z" fill="#77bfe4" stroke="#cdeffc" />
      </>
    ),
  },
  {
    name: 'Screen Recorder',
    art: (
      <>
        <path d="M4 31c6 0 8-4 9-11s3-11 11-11" stroke="#7c7c7c" strokeWidth="5" />
        <path d="M24.500 9.500a9.500 9.500 0 0 1 9.500 9.500" stroke="#f04a22" strokeWidth="5.500" />
        <path d="M34 20.500a9.500 9.500 0 0 1-9 9M23.500 29.500a9.500 9.500 0 0 1-8.500-10" stroke="#a5a5a5" strokeWidth="5.500" />
      </>
    ),
  },
  {
    name: 'VLC',
    art: (
      <>
        <path d="M9 27h22l3 7H6z" fill="#f08a1c" stroke="#ffb45c" strokeWidth=".8" />
        <path d="M18 4h4l7 24c-3 3-15 3-18 0z" fill="#f58a1e" /><path d="m16.500 9-1.800 7c3 1.500 8 1.500 10.600 0l-1.800-7c-2 1-5 1-7 0zM13.200 21 12 26c4 3 12 3 16 0l-1.200-5c-4 2-10 2-13.600 0z" fill="#eee" />
      </>
    ),
  },
  {
    name: 'Chrome',
    state: 'stack',
    art: (
      <>
        <circle cx="19" cy="19" r="15" fill="#f6c431" /><path d="M19 19 6 11.500A15 15 0 0 1 32.500 12H19z" fill="#df4a3c" /><path d="M19 19 5.500 12A15 15 0 0 0 17 34l6-11z" fill="#2f9c50" />
        <circle cx="19" cy="19" r="7" fill="#fff" /><circle cx="19" cy="19" r="5.500" fill="#4182e8" />
        <path d="M20 19h15v15H20z" fill="#6f7362" /><path d="M22 34c0-3 2-4 5-4s7 1 8 4z" fill="#262626" /><path d="M24 22h8v6c-1 5-6 5-8 0z" fill="#a87857" /><path d="M23 25c-2-7 11-7 10 0l-2-2-6 1z" fill="#161210" />
      </>
    ),
  },
  {
    name: 'Video Downloader',
    art: (
      <>
        <path d="m13 4 7 8 7-8" stroke="#303b48" strokeWidth="1.500" /><ellipse cx="20" cy="22" rx="13" ry="11" fill="#d2202c" stroke="#3a3a42" strokeWidth="1.500" /><path d="M8 20c1-11 23-11 24 0-7-3-17-3-24 0z" fill="#dfc7ca" />
        <path d="M18 17h5v6h4l-6.500 7-6.500-7h4z" fill="#fff" />
      </>
    ),
  },
  {
    name: 'Word',
    state: 'stack',
    art: (
      <>
        <path d="M20 7h14v24H20z" fill="#fff" stroke="#2b569a" /><path d="M23 11h8M23 14h8M23 17h8M23 20h8M23 23h8M23 26h8" stroke="#2b569a" strokeWidth="1.300" />
        <path d="m5 7 18-3v31L5 32z" fill="#2b579a" />
        <text x="8" y="24" fontFamily="'Open Sans', sans-serif" fontWeight="700" fontSize="13" fill="#fff">W</text>
      </>
    ),
  },
  {
    name: 'Illustrator',
    state: 'active',
    art: (
      <>
        <path d="M6 4h28v27H6z" fill="#f0aa43" /><path d="M8.500 6.500h23v22h-23z" fill="#2e1d0c" />
        <text x="12" y="23" fontFamily="'Open Sans', sans-serif" fontWeight="700" fontSize="15" fill="#f0a33c">Ai</text>
      </>
    ),
  },
];

const appFrame = {
  open: 'w-[58px] border border-[#a0a0a0] bg-[#7a7a7a]',
  stack: 'w-[54px] border border-[#a0a0a0] bg-[#7a7a7a]',
  active: 'w-[58px] border border-white bg-[#9d9d9d]',
};

const Taskbar = () => (
  <footer className="relative flex h-10 shrink-0 overflow-hidden bg-linear-to-r from-[#595959] via-[#575656] to-[#5c5453]">
    <svg className="absolute inset-0" width="100%" height="40" fill="none" aria-hidden="true">
      <path d="M0 0h57c8 10 14 25 16 40H0z" fill="#59648f" />
      <path d="M0 26c20 2 40 10 55 14H0z" fill="#4a4d60" />
      <svg x="72%" width="240" height="40" className="overflow-visible">
        <ellipse cx="40" cy="20" rx="170" ry="40" fill="url(#glow)" />
        <ellipse cx="22" cy="-1" rx="36" ry="27" fill="#575756" />
        <path d="M57 0h31C82 20 62 30 38 29c-10 0-18-2-24-5 24 4 43-4 43-24z" fill="#526398" />
      </svg>
    </svg>
    <div className="relative flex pl-[15px]">
      {apps.map((a) => (
        <div key={a.name} className="flex w-[62px] items-center justify-center">
          <button aria-label={a.name} className={`flex h-[39px] items-center justify-center ${a.state ? appFrame[a.state] : ''}`}>
            <Icon w={40} h={38}>{a.art}</Icon>
          </button>
          {a.state === 'stack' && <span className="h-[39px] w-[5px] border border-l-0 border-[#a0a0a0] bg-[#7a7a7a]" />}
        </div>
      ))}
    </div>
    <div className="relative ml-auto flex items-center pr-[22px] text-[12px] text-white">
      <button aria-label="Show hidden icons" className="mr-[14px]"><Icon w={8} h={5}><path d="M0 5h8L4 .5z" fill="#fff" /></Icon></button>
      <button aria-label="Battery" className="mr-[9px]">
        <Icon w={15} h={16}>
          <path d="M7.500 3.500h6v11h-6z" fill="#888" stroke="#fff" strokeWidth="1.600" /><path d="M9 1h3v2H9z" fill="#fff" />
          <path d="M1 4h5v4H1zM1.500 1v3M5 1v3M3.500 8v7" fill="#fff" stroke="#fff" />
        </Icon>
      </button>
      <button aria-label="Network" className="mr-[9px]">
        <Icon w={15} h={12}><path d="M0 9h2v3H0zM3 8h2v4H3zM6 6h2v6H6zM9 3h2v9H9zM12 0h2v12h-2z" fill="#fff" /></Icon>
      </button>
      <button aria-label="Volume" className="mr-[18px]">
        <Icon w={14} h={14}>
          <path d="M0 4.500h3L7 1v12L3 9.500H0z" fill="#fff" /><path d="M9 4.500q2 2.500 0 5M11 2.500q4 4.500 0 9" stroke="#ddd" />
        </Icon>
      </button>
      <button className="pt-px text-center leading-[17px] whitespace-nowrap">
        <span className="block">12:10 AM</span>
        <span className="block">16/5/2016</span>
      </button>
    </div>
  </footer>
);

export default function App() {
  return (
    <div className="flex h-screen flex-col overflow-hidden bg-[#484848] font-['Open_Sans','Noto_Sans',sans-serif]">
      <svg width="0" height="0" className="absolute" aria-hidden="true">
        <defs>
          <linearGradient id="metal"><stop stopColor="#333" /><stop offset="1" stopColor="#bbb" /></linearGradient>
          <radialGradient id="glow"><stop stopColor="#53597c" /><stop offset="1" stopColor="#53597c" stopOpacity="0" /></radialGradient>
        </defs>
      </svg>
      <MenuBar />
      <ControlBar />
      <div className="flex min-h-0 flex-1">
        <ToolPanel />
        <Workspace />
        <PanelDock />
      </div>
      <Taskbar />
    </div>
  );
}
